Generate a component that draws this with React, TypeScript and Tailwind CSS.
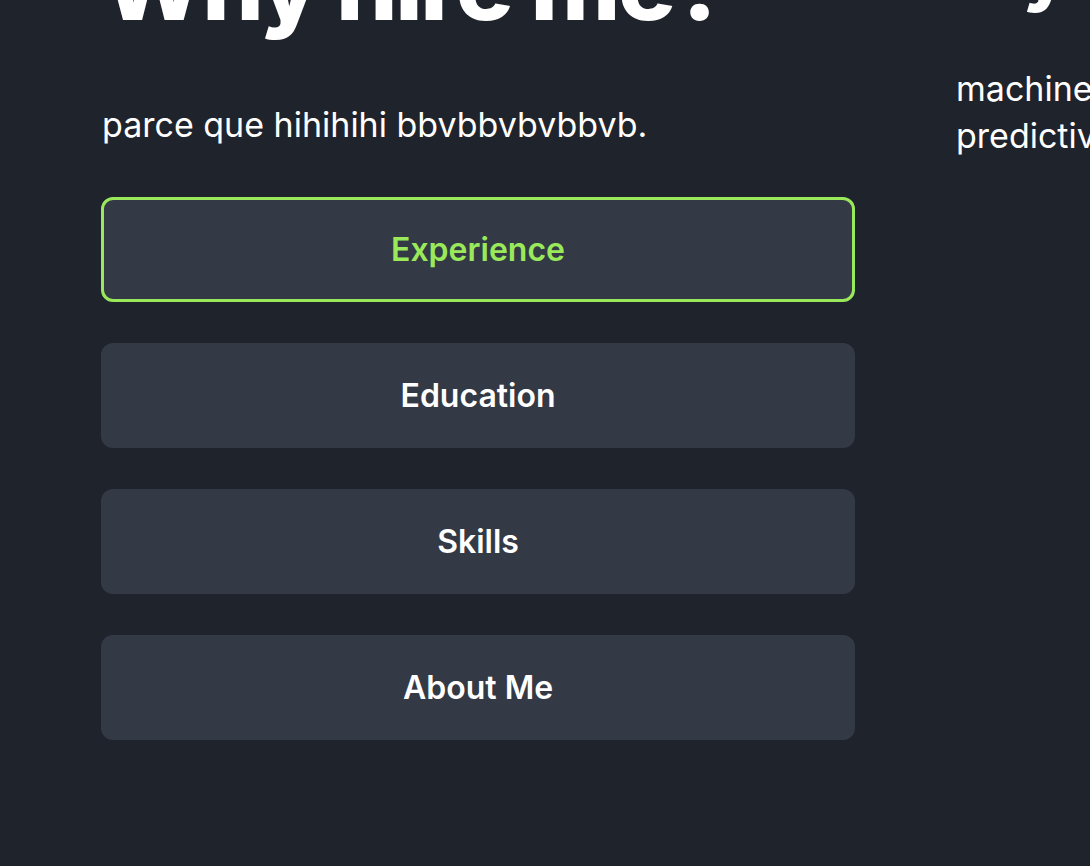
import React, { useState } from 'react';

const tabs = ['Experience', 'Education', 'Skills', 'About Me'];

/**
 * Resume section - "Why hire me?" with tab buttons
 */
export default function App(): JSX.Element {
  const [active, setActive] = useState('Experience');

  return (
    <div
      className="min-h-screen w-full overflow-hidden bg-[#1f232c] text-white"
      style={{ fontFamily: 'Inter, "Noto Sans", sans-serif' }}
    >
      <div className="flex items-start gap-[101px] pl-[101px] -mt-[64px]">
        {/* Left column */}
        <div className="w-[754px] shrink-0">
          <h2 className="pl-px text-[97px] font-extrabold leading-none tracking-tight">Why hire me?</h2>
          <p className="mt-[68px] pl-px text-[34px] leading-[47px]">parce que hihihihi bbvbbvbvbbvb.</p>
          <div className="mt-[49px] flex flex-col gap-[41px]">
            {tabs.map((tab) => {
              const isActive = tab === active;
              return (
                <button
                  key={tab}
                  onClick={() => setActive(tab)}
                  className={`h-[105px] w-full rounded-[12px] bg-[#333945] text-[32px] font-semibold ${
                    isActive ? 'border-[3px] border-[#9ae95b] text-[#9ae95b]' : 'text-white'
                  }`}
                >
                  {tab}
                </button>
              );
            })}
          </div>
        </div>

        {/* Right column (cut off by the window) */}
        <div className="w-[760px] shrink-0">
          <h2 className="text-[72px] font-extrabold leading-none tracking-tight">My experience</h2>
          <p className="mt-[57px] text-[34px] leading-[47px]">
            machine learning engineer building
            <br />
            predictive models and data pipelines.
          </p>
        </div>
      </div>
    </div>
  );
}
